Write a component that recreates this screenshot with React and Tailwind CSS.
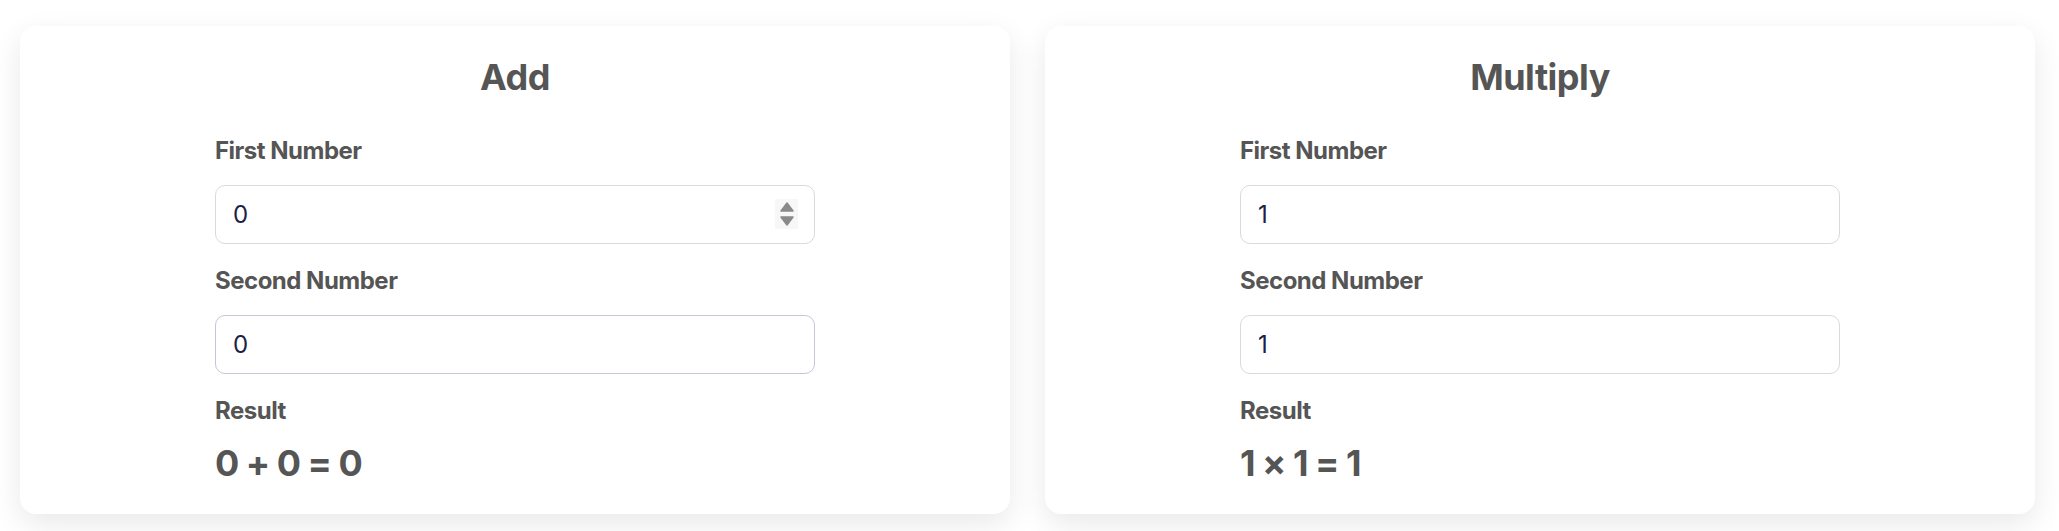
import React, { useState } from "react";

const font = { fontFamily: "Inter, 'Noto Sans', sans-serif" };

const Spinner = () => (
  <div className="absolute right-[17px] top-[14px] flex h-[30px] w-[23px] flex-col items-center justify-center gap-[4px] bg-[#f7f7f8]">
    <svg width="14" height="10" viewBox="0 0 14 10">
      <path d="M7 1 L13 9 L1 9 Z" fill="#8a8a8a" stroke="#8a8a8a" strokeLinejoin="round" strokeWidth="1.5" />
    </svg>
    <svg width="14" height="10" viewBox="0 0 14 10">
      <path d="M1 1 L13 1 L7 9 Z" fill="#8a8a8a" stroke="#8a8a8a" strokeLinejoin="round" strokeWidth="1.5" />
    </svg>
  </div>
);

const Field = ({ label, value, onChange, first, spinner, strong }) => (
  <div className={first ? "mt-[38px]" : "mt-[21px]"}>
    <label className="block text-[24px] leading-[32px] font-bold tracking-[-0.5px] text-[#555555]">
      {label}
    </label>
    <div className="relative mt-[18px]">
      <input
        type="text"
        value={value}
        onChange={(e) => onChange(e.target.value)}
        className={
          "block h-[59px] w-full rounded-[10px] border bg-white pl-[17px] text-[24px] text-[#1c2145] outline-none " +
          (strong ? "border-[#c6c6d6]" : "border-[#d9d9e2]")
        }
        style={font}
      />
      {spinner && <Spinner />}
    </div>
  </div>
);

const Calculator = ({ title, a, b, setA, setB, op, result, spinnerFirst, strongSecond }) => (
  <div className="flex flex-col items-center rounded-[16px] bg-white px-8 pt-[31px] pb-[31px] shadow-[0_10px_30px_rgba(0,0,0,0.09)]">
    <h2 className="text-[36px] leading-[40px] font-bold tracking-[-0.5px] text-[#555555]">{title}</h2>
    <div className="w-[600px]">
      <Field label="First Number" value={a} onChange={setA} first spinner={spinnerFirst} />
      <Field label="Second Number" value={b} onChange={setB} strong={strongSecond} />
      <div className="mt-[21px] text-[24px] leading-[32px] font-bold tracking-[-0.5px] text-[#555555]">Result</div>
      <div className="mt-[16px] text-[36px] leading-[40px] font-bold tracking-[-1px] text-[#555555]">
        {a} {op} {b} = {result}
      </div>
    </div>
  </div>
);

export default function App() {
  const [a1, setA1] = useState("0");
  const [b1, setB1] = useState("0");
  const [a2, setA2] = useState("1");
  const [b2, setB2] = useState("1");

  return (
    <div className="h-[531px] overflow-hidden bg-white pt-[26px] pl-[20px] pr-[24px]" style={font}>
      <div className="grid grid-cols-2 gap-[35px]">
        <Calculator
          title="Add"
          a={a1}
          b={b1}
          setA={setA1}
          setB={setB1}
          op="+"
          result={(Number(a1) || 0) + (Number(b1) || 0)}
          spinnerFirst
          strongSecond
        />
        <Calculator
          title="Multiply"
          a={a2}
          b={b2}
          setA={setA2}
          setB={setB2}
          op="×"
          result={(Number(a2) || 0) * (Number(b2) || 0)}
        />
      </div>
    </div>
  );
}
